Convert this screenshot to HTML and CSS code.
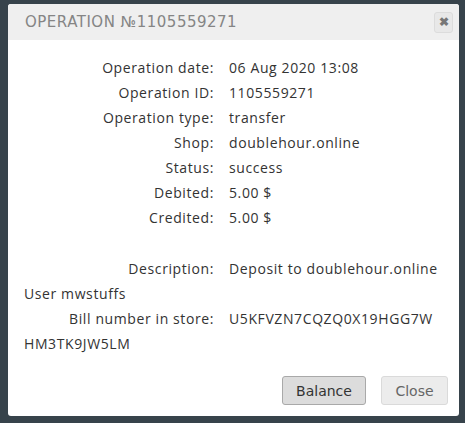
FILE: index.html
```html
<!DOCTYPE html>
<html lang="en">

<head>
    <meta charset="UTF-8">
    <meta name="viewport" content="width=device-width, initial-scale=1.0">
    <title>Operation 1105559271</title>
    <link rel="stylesheet" href="styles.css">
</head>

<body>
    <div class="dialog">
        <div class="dialog-header">
            <h1>Operation №1105559271</h1>
            <button class="close-x" title="Close">&#10006;</button>
        </div>

        <div class="dialog-body">
            <div class="row"><span class="label">Operation date:</span>06 Aug 2020 13:08</div>
            <div class="row"><span class="label">Operation ID:</span>1105559271</div>
            <div class="row"><span class="label">Operation type:</span>transfer</div>
            <div class="row"><span class="label">Shop:</span>doublehour.online</div>
            <div class="row"><span class="label">Status:</span>success</div>
            <div class="row"><span class="label">Debited:</span>5.00 $</div>
            <div class="row"><span class="label">Credited:</span>5.00 $</div>

            <div class="row spaced"><span class="label">Description:</span>Deposit to doublehour.online User mwstuffs</div>
            <div class="row"><span class="label">Bill number in store:</span>U5KFVZN7CQZQ0X19HGG7W HM3TK9JW5LM</div>
        </div>

        <div class="dialog-footer">
            <button class="btn btn-main">Balance</button>
            <button class="btn btn-light">Close</button>
        </div>
    </div>
</body>

</html>
```

FILE: styles.css
```css
* {
    margin: 0;
    padding: 0;
    box-sizing: border-box;
}

body {
    height: 100vh;
    background-color: #37434b;
    padding: 4px 6px 7px 8px;
    font-family: "Open Sans", sans-serif;
}

.dialog {
    background-color: #fff;
    border-radius: 3px;
    height: 100%;
    display: flex;
    flex-direction: column;
    overflow: hidden;
}

.dialog-header {
    background-color: #efefef;
    height: 36px;
    display: flex;
    align-items: center;
    justify-content: space-between;
    padding: 0 6px 0 17px;
}

.dialog-header h1 {
    font-family: "DejaVu Sans", sans-serif;
    font-weight: normal;
    font-size: 15px;
    letter-spacing: 0.5px;
    text-transform: uppercase;
    color: #858585;
}

.close-x {
    width: 19px;
    height: 21px;
    border: 1px solid #dcdcdc;
    border-radius: 3px;
    background-color: #e8e8e8;
    color: #777;
    font-size: 12px;
    font-weight: bold;
    line-height: 19px;
    cursor: pointer;
}

.dialog-body {
    flex: 1;
    padding: 15px 16px 0 16px;
    font-size: 14px;
    letter-spacing: 0.6px;
    color: #333;
}

.row {
    line-height: 25px;
}

.row.spaced {
    margin-top: 26px;
}

.label {
    display: inline-block;
    width: 190px;
    padding-right: 15px;
    text-align: right;
    box-sizing: content-box;
}

.dialog-footer {
    display: flex;
    justify-content: flex-end;
    gap: 15px;
    padding: 0 11px 11px 0;
}

.btn {
    font-family: "DejaVu Sans", sans-serif;
    font-size: 14px;
    height: 29px;
    border-radius: 3px;
    cursor: pointer;
}

.btn-main {
    width: 84px;
    background-color: #dcdcdc;
    border: 1px solid #a9a9a9;
    color: #333;
}

.btn-light {
    width: 67px;
    background-color: #ececec;
    border: 1px solid #dadada;
    color: #666;
}
```
